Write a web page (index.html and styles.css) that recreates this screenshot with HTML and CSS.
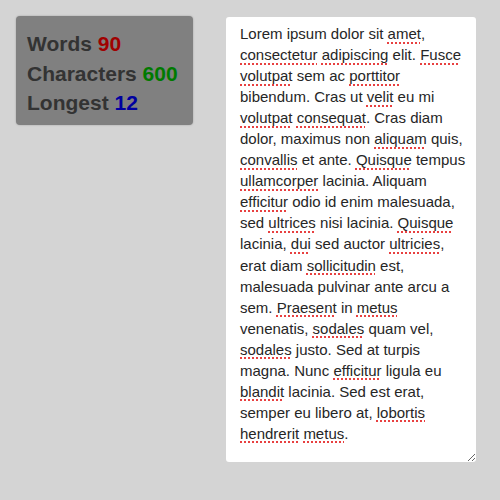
FILE: index.html
```html
<!DOCTYPE html>
<html>
<head>
<meta charset="utf-8">
<link rel="stylesheet" href="styles.css">
</head>
<body>
<div class="page">
  <div class="stats">
    <div class="stat">Words <span class="n red">90</span></div>
    <div class="stat">Characters <span class="n green">600</span></div>
    <div class="stat">Longest <span class="n blue">12</span></div>
  </div>
  <div class="editor">Lorem ipsum dolor sit <u>amet</u>,<br><u>consectetur</u> <u>adipiscing</u> elit. <u>Fusce</u><br><u>volutpat</u> sem ac <u>porttitor</u><br>bibendum. Cras ut <u>velit</u> eu mi<br><u>volutpat</u> <u>consequat</u>. Cras diam<br>dolor, maximus non <u>aliquam</u> quis,<br><u>convallis</u> et ante. <u>Quisque</u> tempus<br><u>ullamcorper</u> lacinia. Aliquam<br><u>efficitur</u> odio id enim malesuada,<br>sed <u>ultrices</u> nisi lacinia. <u>Quisque</u><br>lacinia, <u>dui</u> sed auctor <u>ultricies</u>,<br>erat diam <u>sollicitudin</u> est,<br>malesuada pulvinar ante arcu a<br>sem. <u>Praesent</u> in <u>metus</u><br>venenatis, <u>sodales</u> quam vel,<br><u>sodales</u> justo. Sed at turpis<br>magna. Nunc <u>efficitur</u> ligula eu<br><u>blandit</u> lacinia. Sed est erat,<br>semper eu libero at, <u>lobortis</u><br><u>hendrerit</u> <u>metus</u>.</div>
</div>
</body>
</html>
```

FILE: styles.css
```css
html, body {
  margin: 0;
  padding: 0;
  background: #d4d4d4;
}
.page {
  display: flex;
  align-items: flex-start;
  gap: 33px;
  padding: 16px;
}
.stats {
  width: 177px;
  height: 109px;
  box-sizing: border-box;
  background: #808080;
  border-radius: 4px;
  box-shadow: 0 0 2px rgba(0,0,0,0.25);
  padding: 13px 11px;
  font-family: "Liberation Sans", Arial, sans-serif;
  font-weight: bold;
  font-size: 21px;
  line-height: 29.5px;
  color: #333;
}
.stat {
  white-space: nowrap;
}
.red { color: #a00000; }
.green { color: #007a00; }
.blue { color: #0000a0; }
.editor {
  margin-top: 1px;
  width: 250px;
  height: 445px;
  box-sizing: border-box;
  background: #fff;
  border-radius: 3px;
  padding: 6px 14px;
  font-family: "Liberation Sans", Arial, sans-serif;
  font-size: 15px;
  line-height: 21.05px;
  color: #262626;
  white-space: nowrap;
  resize: both;
  overflow: auto;
}
.editor u {
  text-decoration: underline dotted #e84040;
  text-decoration-thickness: 1.5px;
  text-underline-offset: 3px;
}
```
